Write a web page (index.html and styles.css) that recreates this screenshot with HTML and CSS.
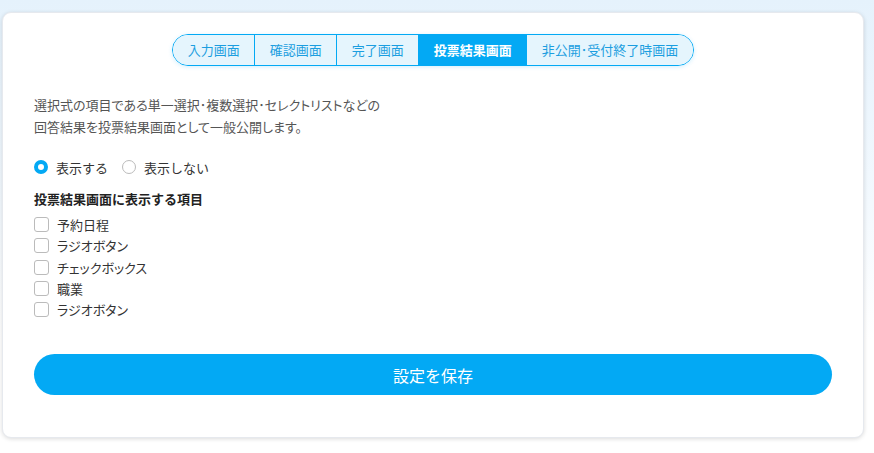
FILE: index.html
```html
<!DOCTYPE html>
<html lang="ja">
<head>
<meta charset="utf-8">
<link rel="stylesheet" href="styles.css">
</head>
<body>
<div class="card">
  <div class="tabs-wrap">
    <div class="tabs">
      <span class="tab">入力画面</span>
      <span class="tab">確認画面</span>
      <span class="tab">完了画面</span>
      <span class="tab active">投票結果画面</span>
      <span class="tab">非公開･受付終了時画面</span>
    </div>
  </div>
  <p class="desc">選択式の項目である単一選択･複数選択･セレクトリストなどの<br>回答結果を投票結果画面として一般公開します。</p>
  <div class="radios">
    <label class="radio"><span class="dot on"></span>表示する</label>
    <label class="radio"><span class="dot"></span>表示しない</label>
  </div>
  <h3 class="heading">投票結果画面に表示する項目</h3>
  <ul class="checks">
    <li><span class="box"></span>予約日程</li>
    <li><span class="box"></span>ラジオボタン</li>
    <li><span class="box"></span>チェックボックス</li>
    <li><span class="box"></span>職業</li>
    <li><span class="box"></span>ラジオボタン</li>
  </ul>
  <button class="save">設定を保存</button>
</div>
</body>
</html>
```
FILE: styles.css
```css
html, body {
  margin: 0;
  height: 100%;
}
body {
  background: linear-gradient(180deg, #e5f2fc 0%, #f3f9fe 45%, #ffffff 75%);
  font-family: "Noto Sans CJK JP", "Noto Sans", sans-serif;
  padding: 12px 10px 0 2px;
  box-sizing: border-box;
}
.card {
  background: #fff;
  border-radius: 9px;
  box-shadow: 0 1px 4px rgba(0,0,0,0.14);
  border: 1px solid #e6e9ee;
  padding: 21px 31px 42px 31px;
  height: 426px;
  box-sizing: border-box;
}
.tabs-wrap {
  display: flex;
  justify-content: center;
}
.tabs {
  display: flex;
  border: 1px solid #03a9f4;
  border-radius: 16px;
  overflow: hidden;
  box-shadow: 0 1px 4px rgba(3,169,244,0.18);
}
.tab {
  height: 30px;
  line-height: 30px;
  padding: 0 14.5px;
  font-size: 13px;
  color: #1b9ee0;
  background: #e5f5fd;
  border-left: 1px solid #03a9f4;
  white-space: nowrap;
}
.tab:first-child {
  border-left: none;
}
.tab.active {
  background: #03a9f4;
  color: #fff;
  font-weight: 700;
}
.desc {
  margin: 28px 0 0;
  font-size: 13px;
  line-height: 22px;
  color: #555;
  font-feature-settings: "palt";
}
.radios {
  display: flex;
  gap: 14px;
  margin-top: 19px;
}
.radio {
  display: flex;
  align-items: center;
  font-size: 13px;
  color: #333;
  height: 20px;
}
.dot {
  width: 14px;
  height: 14px;
  border-radius: 50%;
  border: 1px solid #bbb;
  box-sizing: border-box;
  margin-right: 8px;
}
.dot.on {
  border: 4px solid #03a9f4;
}
.heading {
  margin: 12px 0 0;
  font-size: 13px;
  font-weight: 700;
  color: #222;
  line-height: 20px;
}
.checks {
  list-style: none;
  margin: 5px 0 0;
  padding: 0;
}
.checks li {
  display: flex;
  align-items: center;
  height: 21.3px;
  font-size: 13px;
  color: #333;
  font-feature-settings: "palt";
}
.box {
  width: 15px;
  height: 15px;
  border: 1px solid #bbb;
  border-radius: 3px;
  box-sizing: border-box;
  margin-right: 8px;
}
.save {
  display: block;
  width: 100%;
  margin-top: 34px;
  height: 41px;
  border: none;
  border-radius: 21px;
  background: #03a9f4;
  color: #fff;
  font-family: "Noto Sans CJK JP", "Noto Sans", sans-serif;
  font-size: 16px;
}
```
